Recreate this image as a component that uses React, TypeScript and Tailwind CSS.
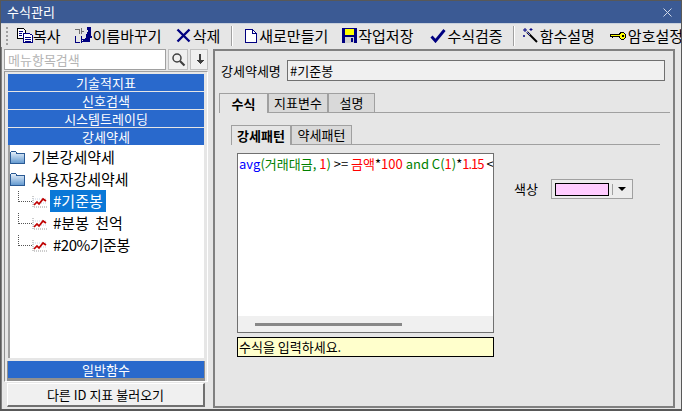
import React from "react";

const font = "font-['Noto_Sans_CJK_KR','Liberation_Sans',sans-serif]";

const CopyIcon = () => (
  <svg width="16" height="15" viewBox="0 0 16 15" shapeRendering="crispEdges" fill="none">
    <path d="M.5.500h6l2 2v8h-8z" fill="#fff" stroke="#000" />
    <path d="M6.500 5.500h6l3 2v7h-9z" fill="#fff" stroke="#000080" />
    <path d="M2 3h4M2 5h3M2 7h3M8 9h6M8 11h6M8 13h6" stroke="#000080" />
  </svg>
);

const RenameIcon = () => (
  <svg width="18" height="17" viewBox="0 0 18 17" fill="none" shapeRendering="crispEdges">
    <path d="M1 2h5M5 2v5M7 1v6M8 4h2" stroke="#707070" />
    <path d="M1 9v6h5M7 9v7M8 12h2" stroke="#000080" />
    <path d="M13 0h4v9h1v2h-2v4H7v-1h2v-2h2v-1h1V7h1V5h1V3h-1z" fill="#000080" />
  </svg>
);

const DeleteIcon = () => (
  <svg width="15" height="15" viewBox="0 0 15 15" fill="none">
    <path d="M1.500 1.500l12 12M13.500 1.500l-12 12" stroke="#000080" strokeWidth="2.400" />
  </svg>
);

const NewIcon = () => (
  <svg width="12" height="14" viewBox="0 0 12 14" shapeRendering="crispEdges" fill="none">
    <path d="M.5.500h7l4 4v9H.5z" fill="#fff" stroke="#000080" />
    <path d="M7.500.500v4h4" stroke="#000080" />
  </svg>
);

const SaveIcon = () => (
  <svg width="15" height="15" viewBox="0 0 15 15" shapeRendering="crispEdges">
    <rect width="15" height="15" fill="#000080" />
    <rect x="3" y="1" width="9" height="6" fill="#ffff00" />
    <rect x="3" y="9" width="9" height="6" fill="#d0d0d0" />
    <rect x="9" y="10" width="2" height="4" fill="#000080" />
  </svg>
);

const CheckIcon = () => (
  <svg width="16" height="14" viewBox="0 0 16 14" fill="none">
    <path d="M1.500 7.500l4 4.500 9-11" stroke="#000080" strokeWidth="2.800" />
  </svg>
);

const WandIcon = () => (
  <svg width="16" height="15" viewBox="0 0 16 15" fill="none">
    <path d="M5 4l10 10" stroke="#000" strokeWidth="2" />
    <path d="M5 4l3 3" stroke="#8080ff" strokeWidth="1" />
    <path d="M3 0v4M1 2h4M9 0v3M7.500 1.500h3M1 8h2M2 7v2" stroke="#000080" strokeWidth="1" />
  </svg>
);

const KeyIcon = () => (
  <svg width="16" height="8" viewBox="0 0 16 8" shapeRendering="crispEdges">
    <path d="M11 0h3v1h1v1h1v4h-1v1h-1v1h-3V7h-1V6H9V5H3v1H2V5H0V2h9V1h1V0z" fill="#000" />
    <path d="M11 1h3v1h1v4h-1v1h-3V6h-1V4H1V3h9V2h1z" fill="#ffff00" />
    <rect x="12" y="3" width="2" height="2" fill="#000" />
  </svg>
);

const FolderIcon = () => (
  <svg width="16" height="14" viewBox="0 0 16 14" shapeRendering="crispEdges">
    <defs>
      <linearGradient id="fld" x1="0" y1="0" x2="0" y2="1">
        <stop offset="0" stopColor="#f0f6fc" />
        <stop offset="1" stopColor="#5f97cf" />
      </linearGradient>
    </defs>
    <path d="M.5 2.500l1-1.500h4l1 2h8v10.500H.5z" fill="url(#fld)" stroke="#2a5a94" />
  </svg>
);

const ChartIcon = () => (
  <svg width="15" height="13" viewBox="0 0 15 13" fill="none" className="shrink-0">
    <path d="M1 1v11h14" stroke="#999" strokeDasharray="1 1" />
    <path d="M1 4h14M1 8h14" stroke="#c8d4e4" strokeDasharray="1 1" />
    <path d="M2 10l3-3 2 2 4-5 3 2" stroke="#c00000" strokeWidth="1.700" />
  </svg>
);

const toolItems = [
  { label: "복사", icon: <CopyIcon />, box: "ml-[7px] w-[17px]" },
  { label: "이름바꾸기", icon: <RenameIcon />, box: "ml-[13px] w-[19px]" },
  { label: "삭제", icon: <DeleteIcon />, box: "ml-[13px] w-[18px]" },
  { label: "SEP", icon: null, box: "ml-[11px]" },
  { label: "새로만들기", icon: <NewIcon />, box: "ml-[9px] w-[17px]" },
  { label: "작업저장", icon: <SaveIcon />, box: "ml-[13px] w-[17px]" },
  { label: "수식검증", icon: <CheckIcon />, box: "ml-[16px] w-[18px]" },
  { label: "SEP", icon: null, box: "ml-[10px]" },
  { label: "함수설명", icon: <WandIcon />, box: "ml-[6px] w-[19px]" },
  { label: "암호설정", icon: <KeyIcon />, box: "ml-[14px] w-[19px]" },
];

const Toolbar = () => (
  <div className="flex h-[23px] shrink-0 items-center overflow-hidden bg-[#e6e6e6] pl-[5px] whitespace-nowrap">
    <div className="h-[18px] w-[3px] shrink-0 border-l-2 border-dotted border-[#a0a0a0]" />
    {toolItems.map((it, i) =>
      it.label === "SEP" ? (
        <div key={i} className={`h-[20px] w-[2px] shrink-0 border-l border-r border-l-[#a0a0a0] border-r-white ${it.box}`} />
      ) : (
        <div key={i} className="flex shrink-0 items-center">
          <div className={`flex h-[20px] shrink-0 items-center justify-center ${it.box}`}>{it.icon}</div>
          <span className="pt-[1px] text-[15px] leading-[20px] text-black">{it.label}</span>
        </div>
      )
    )}
  </div>
);

const Header = ({ label }: { label: string }) => (
  <div className="flex h-[17px] items-center justify-center bg-[#2969cc] text-[13px] leading-none text-white">{label}</div>
);

const TreeRow = ({ label, selected, textClass }: { label: string; selected?: boolean; textClass?: string }) => (
  <div className="flex h-[22px] items-center">
    <div className="ml-[8px] h-[11px] w-[14px] shrink-0 -translate-y-[5px] border-b border-l border-dotted border-[#555]" />
    <ChartIcon />
    <span className={`ml-[3px] flex h-[22px] items-center px-[3px] text-[15px] whitespace-pre ${textClass ?? ""} ${selected ? "bg-[#0a78d7] text-white" : "text-black"}`}>{label}</span>
  </div>
);

const LeftPanel = () => (
  <div className="flex w-[204px] shrink-0 flex-col">
    <div className="flex h-[21px] gap-[2px]">
      <div className="flex h-[21px] w-[162px] items-center border border-[#a0a0a0] bg-white px-[3px] text-[13px] text-[#b4b4b4]">메뉴항목검색</div>
      <div className="flex h-[21px] w-[20px] items-center justify-center border border-[#c0c0c0] bg-[#f0f0f0]">
        <svg width="15" height="15" viewBox="0 0 15 15" fill="none">
          <circle cx="6" cy="6" r="4" stroke="#404040" strokeWidth="1.500" />
          <path d="M9 9l4.500 4.500" stroke="#404040" strokeWidth="2.200" />
        </svg>
      </div>
      <div className="flex h-[21px] w-[18px] items-center justify-center border border-[#c0c0c0] bg-[#f0f0f0]">
        <svg width="9" height="11" viewBox="0 0 9 11" fill="none" shapeRendering="crispEdges">
          <path d="M3.500 0h2v6h3v1h-1v1h-1v1h-1v1h-1V9h-1V8h-1V7h-1V6h3z" fill="#404040" />
        </svg>
      </div>
    </div>
    <div className="mt-[1px] flex h-[311px] flex-col border border-t-[#a0a0a0] border-r-white border-b-white border-l-[#909090] bg-[#e6e6e6] pt-[2px] pr-[3px] pl-[3px]">
      <div className="flex flex-col gap-[1px]">
        <Header label="기술적지표" />
        <Header label="신호검색" />
        <Header label="시스템트레이딩" />
        <Header label="강세약세" />
      </div>
      <div className="flex h-[213px] flex-col border-l-2 border-[#a0a0a0] bg-white">
        <div className="flex h-[23px] items-center pt-[1px]">
          <FolderIcon />
          <span className="ml-[6px] text-[15px] text-black">기본강세약세</span>
        </div>
        <div className="flex h-[22px] items-center">
          <FolderIcon />
          <span className="ml-[6px] text-[15px] text-black">사용자강세약세</span>
        </div>
        <TreeRow label="#기준봉" selected />
        <TreeRow label="#분봉 천억" textClass="[word-spacing:3px]" />
        <TreeRow label="#20%기준봉" textClass="tracking-[-0.5px]" />
      </div>
      <div className="mt-[3px] -mx-[1px] border-x border-b-[3px] border-[#909090]">
        <Header label="일반함수" />
      </div>
    </div>
    <div className="mt-[1px] ml-[3px] flex h-[24px] w-[198px] items-center justify-center border border-r-2 border-b-2 border-white border-r-[#707070] border-b-[#707070] bg-[#f0f0f0] text-[13px] text-black">
      다른 ID 지표 불러오기
    </div>
  </div>
);

const tabBase = "flex items-center justify-center border border-b-0 border-[#a0a0a0] text-[13px] text-black";

const RightPanel = () => (
  <div className="ml-[5px] flex h-[359px] w-[462px] shrink-0 flex-col border-2 border-[#808080] bg-[#e6e6e6] pt-[9px] pr-[3px] pl-[4px]">
    <div className="flex h-[21px] items-center">
      <span className="ml-[2px] w-[66px] text-[13px] text-black">강세약세명</span>
      <div className="flex h-[21px] w-[378px] items-center border border-[#707070] bg-[#f0f0f0] px-[2px] text-[13px] text-black">#기준봉</div>
    </div>
    <div className="mt-[12px] flex h-[20px] border-b border-[#a0a0a0]">
      <div className={`${tabBase} h-[20px] w-[49px] bg-[#e6e6e6] font-bold`}>수식</div>
      <div className={`${tabBase} h-[19px] w-[60px] bg-[#d9d9d9]`}>지표변수</div>
      <div className={`${tabBase} h-[19px] w-[47px] bg-[#d9d9d9]`}>설명</div>
    </div>
    <div className="mt-[12px] ml-[12px] flex h-[20px] w-[429px] border-b border-[#a0a0a0]">
      <div className={`${tabBase} h-[20px] w-[60px] bg-[#e6e6e6] font-bold`}>강세패턴</div>
      <div className={`${tabBase} h-[19px] w-[61px] bg-[#d9d9d9]`}>약세패턴</div>
    </div>
    <div className="mt-[8px] ml-[18px] flex">
      <div className="flex w-[257px] shrink-0 flex-col">
        <div className="flex h-[180px] flex-col border border-[#707070] bg-white">
          <div className="h-[162px] overflow-hidden px-[1px] pt-[1px] text-[13px] leading-[18px] whitespace-nowrap">
            <span className="text-[#0000ff]">avg</span>
            <span className="text-[#008000]">(거래대금, </span>
            <span className="text-[#ff0000]">1</span>
            <span className="text-[#008000]">) </span>
            <span className="text-black">&gt;= </span>
            <span className="text-[#ff0000]">금액</span>
            <span className="text-black">*</span>
            <span className="text-[#ff0000]">100</span>
            <span className="text-[#008000]"> and C(</span>
            <span className="text-[#ff0000]">1</span>
            <span className="text-[#008000]">)</span>
            <span className="text-black">*</span>
            <span className="tracking-[-1px] text-[#ff0000]">1.15</span>
            <span className="text-black"> &lt;</span>
          </div>
          <div className="flex h-[16px] items-center bg-[#f0f0f0] pl-[17px]">
            <div className="h-[3px] w-[147px] bg-[#888888]" />
          </div>
        </div>
        <div className="mt-[4px] flex h-[20px] items-center border border-black bg-[#ffffcc] px-[1px] text-[13px] text-black">수식을 입력하세요.</div>
      </div>
      <div className="mt-[26px] ml-[20px] flex h-[20px] items-center">
        <span className="w-[37px] text-[13px] text-black">색상</span>
        <div className="flex h-[20px] w-[82px] items-center border border-[#a0a0a0] bg-[#ececec] px-[3px]">
          <div className="h-[13px] w-[54px] border border-black bg-[#ffccff]" />
          <div className="ml-[3px] h-[11px] w-[1px] bg-[#a0a0a0]" />
          <div className="ml-[5px] h-0 w-0 border-x-[4px] border-t-[4px] border-x-transparent border-t-black" />
        </div>
      </div>
    </div>
  </div>
);

export default function App() {
  return (
    <div className={`flex h-[411px] w-[682px] flex-col overflow-hidden border border-b-2 border-[#585858] bg-[#e6e6e6] ${font}`}>
      <div className="flex h-[22px] shrink-0 items-center justify-between bg-[#3b5a94] pr-[9px] pl-[6px] text-[13px] text-white">
        <span>수식관리</span>
        <svg width="9" height="9" viewBox="0 0 9 9" fill="none">
          <path d="M.5.500l8 8M8.500.500l-8 8" stroke="#d0d8e8" />
        </svg>
      </div>
      <div className="h-[1px] shrink-0 bg-[#c8d0dc]" />
      <Toolbar />
      <div className="flex min-h-0 flex-1 border-l border-[#808080] pt-[2px] pl-[2px]">
        <LeftPanel />
        <RightPanel />
      </div>
    </div>
  );
}
